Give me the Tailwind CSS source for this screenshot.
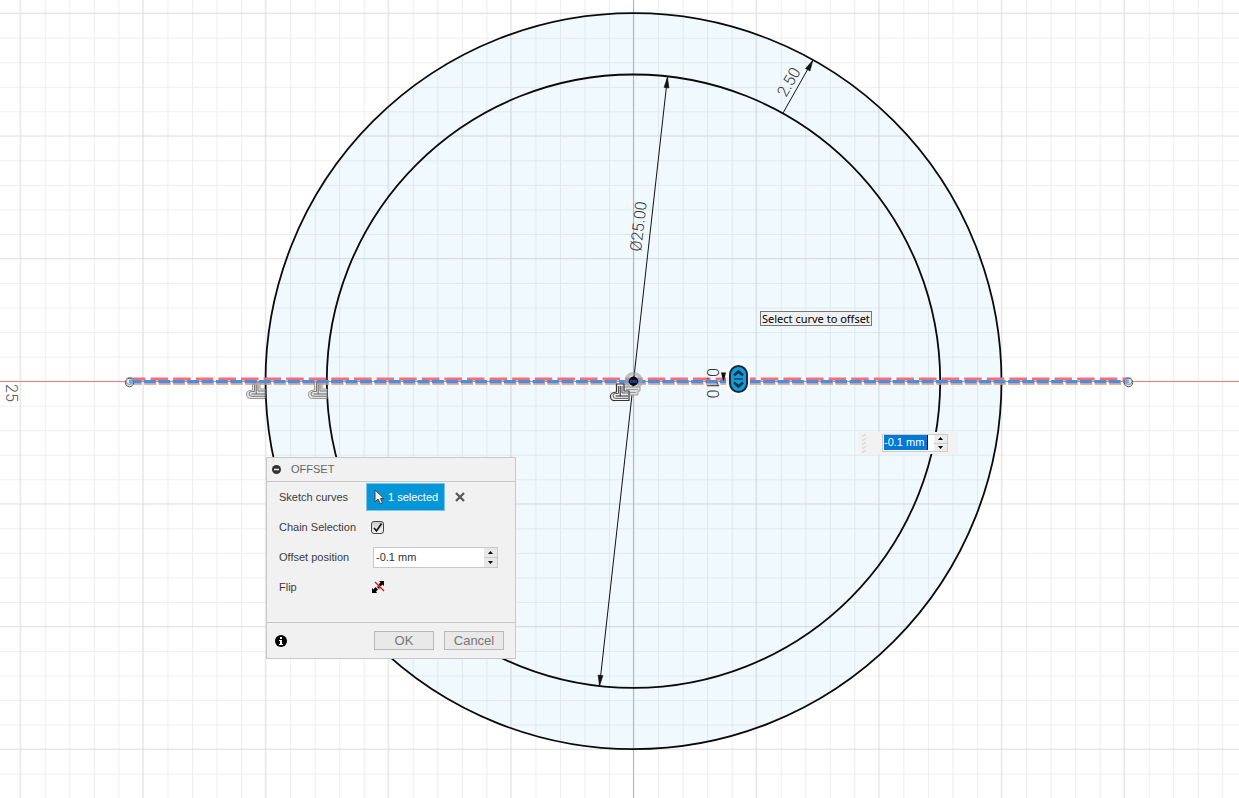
<!DOCTYPE html>
<html lang="en">
<head>
<meta charset="utf-8">
<title>Sketch offset</title>
<script src="https://cdn.jsdelivr.net/npm/@tailwindcss/browser@4"></script>
</head>
<body class="bg-white font-['Liberation_Sans',Arial,sans-serif] text-[11px] text-[#3c3c3c]">
<main class="relative h-screen min-h-[680px] w-full overflow-hidden">
<svg class="absolute inset-0 h-full w-full" fill="none" aria-label="Sketch canvas">
  <defs>
    <pattern id="minor" x="20.3" y="13.2" width="24.53" height="24.53" patternUnits="userSpaceOnUse">
      <path d="M0 .5H24.53M.5 0V24.53" stroke="#000" stroke-opacity=".065"/>
    </pattern>
    <pattern id="major" x="19.5" y="12.6" width="122.66" height="122.66" patternUnits="userSpaceOnUse">
      <path d="M0 .5H122.66M.5 0V122.66" stroke="#000" stroke-opacity=".08"/>
    </pattern>
    <g id="coincident" stroke-linejoin="round">
      <path d="M5.500 0h7.500v7h5v9.500H4a4 4 0 0 1-1-8l2.500-.5z" fill="#e4e4e4" stroke="#999"/>
      <path d="M7.500 0v9.500H4.500a2.300 2.300 0 0 0 0 4.800H18M11 0v9h7" stroke="#777"/>
      <path d="M9.200 1v11H4.500M9 12h9" stroke="#666"/>
    </g>
  </defs>
  <circle cx="633.5" cy="381.2" r="368" fill="#f0f9fe"/>
  <rect width="100%" height="100%" fill="url(#minor)"/>
  <rect width="100%" height="100%" fill="url(#major)"/>
  <rect x="633" y="0" width="1" height="100%" fill="#a0c4ae"/>
  <rect x="633" y="0" width="1" height="380" fill="#78dc8e"/>
  <rect x="0" y="381" width="100%" height="1" fill="#e87f7f"/>
  <circle cx="633.5" cy="381.2" r="368" stroke="#0a0a0a" stroke-width="1.800"/>
  <circle cx="633.5" cy="381.2" r="306.700" stroke="#0a0a0a" stroke-width="1.800"/>

  <use href="#coincident" x="247" y="382"/>
  <use href="#coincident" x="309" y="382"/>
  <path d="M130 384H1128" stroke="#d99a70" stroke-width="1.500" stroke-dasharray="12 2.400"/>
  <path d="M128 379H1128" stroke="#f46f77" stroke-width="3.200" stroke-dasharray="17.500 5.100"/>
  <path d="M129.500 381.700H1128" stroke="#4f8ce0" stroke-width="3.300" stroke-dasharray="12 2.400"/>
  <g stroke="#555">
    <circle cx="129.500" cy="382.500" r="4.200" fill="#e8edf5"/><circle cx="129.500" cy="381" r="3.500" stroke="#888"/>
    <path d="M129 381.500h4" stroke="#70a9f5" stroke-width="4"/>
    <circle cx="1128.500" cy="382.500" r="4.200" fill="#e8edf5"/><circle cx="1128.500" cy="381" r="3.500" stroke="#888"/>
    <path d="M1125 381.500h4" stroke="#70a9f5" stroke-width="4"/>
  </g>

  <g stroke="#111">
    <path d="M599.500 686 667.500 77M783 113 813 60"/>
    <path d="M667.500 77 669 88 664 87.500zM599.500 686 598 675 603 675.500zM813 60 810 71 805.500 68.500z" fill="#111" stroke-width=".5"/>
  </g>
  <circle cx="633.500" cy="381" r="7.500" stroke="#a0a4a8" stroke-opacity=".65" stroke-width="3.500"/>
  <path d="M624 387h16v4h-2v4h-10" fill="#dedede" stroke="#999"/>
  <path d="M626 389.500h12M628 392.500h8" stroke="#999"/>
  <g stroke-linejoin="round">
    <path d="M616.500 384h7.500v7h5v9.500h-14a4 4 0 0 1-1-8l2.500-.5z" fill="#f4f4f4" stroke="#333" stroke-width="1.200"/>
    <path d="M618.500 386v7.500h-3a2.300 2.300 0 0 0 0 4.800H628M622 386v7h6" stroke="#555"/>
    <path d="M620.200 386v10H615.500M620 396h8" stroke="#222"/>
  </g>
  <circle cx="633.500" cy="381.300" r="4.700" fill="#050a14"/>
  <path d="M630 381.500h7" stroke="#123c78" stroke-width="3"/>

  <g class="font-['Roboto',sans-serif] text-[16px] font-light" fill="#333">
    <text transform="translate(641 252) rotate(-83.500)">Ø25.00</text>
    <text transform="translate(786 98) rotate(-60.500)">2.50</text>
    <text transform="translate(707 368) rotate(90)">0.10</text>
    <text transform="translate(6 384) rotate(90)" fill="#555">25</text>
  </g>
  <path d="M721 372.500h5l-2 8h-1z" fill="#111"/>

  <rect x="726" y="363" width="24" height="32" rx="12" fill="#fff" fill-opacity=".85"/>
  <rect x="730" y="366" width="17" height="26" rx="8.500" fill="#129bdb" stroke="#162b38" stroke-width="2"/>
  <path d="m734 375.500 4.500-4 4.500 4M734 382.500l4.500 4 4.500-4" stroke="#123142" stroke-width="2.500"/>
  <path d="M734 379h9" stroke="#123142" stroke-width="1.200"/>
</svg>

<div role="tooltip" class="absolute left-[760px] top-[311px] border border-[#777] bg-[#f0f0f0] px-px font-['Noto_Sans',sans-serif] text-[11px] leading-[13px] whitespace-nowrap text-black">Select curve to offset</div>

<div class="absolute left-[858px] top-[432px] flex h-[22px] w-[100px] items-center bg-[#f2f2f2] pl-1">
  <svg class="h-[20px] w-[4px]" aria-hidden="true"><path d="M1 2v18M3 1v18" stroke="#ccc" stroke-dasharray="2 2"/></svg>
  <div class="ml-4 flex h-[18px] w-[66px] border border-[#ccc] bg-white">
    <label class="sr-only" for="float">Offset</label>
    <div class="min-w-0 flex-1 pl-px">
      <input id="float" value="-0.1 mm" class="block h-[15px] w-[44px] border-r border-black bg-[#0078d7] text-[11px] leading-[15px] text-white outline-none">
    </div>
    <div class="flex w-[13px] flex-col bg-[#ececec] text-black">
      <button class="flex flex-1 items-center justify-center border-b border-[#ccc]" aria-label="Increase"><svg width="5" height="3"><path d="M0 3 2.500 0 5 3z"/></svg></button>
      <button class="flex flex-1 items-center justify-center" aria-label="Decrease"><svg width="5" height="3"><path d="M0 0 2.500 3 5 0z"/></svg></button>
    </div>
  </div>
</div>

<section role="dialog" aria-labelledby="title" class="absolute left-[266px] top-[457px] w-[250px] border border-[#c8c8c8] bg-[#f1f1f1]">
  <header class="flex h-6 items-center gap-[10px] border-b border-[#c8c8c8] pl-[5px]">
    <button aria-label="Collapse"><svg class="block" width="9" height="9"><circle cx="4.500" cy="4.500" r="4.500" fill="#333"/><path d="M2 4.500h5" stroke="#f1f1f1" stroke-width="1.500"/></svg></button>
    <h1 id="title" class="text-[11px] text-[#666]">OFFSET</h1>
  </header>
  <div class="grid h-[140px] auto-rows-[30px] grid-cols-[87px_1fr] items-center pl-3">
    <span>Sketch curves</span>
    <div class="flex items-center gap-[10px]">
      <button class="flex h-7 w-[79px] items-center gap-1 border border-[#7cc4ea] bg-[#0696d7] pl-[7px] whitespace-nowrap text-white">
        <svg class="shrink-0" width="10" height="16"><path d="M1 1v12l3-3 2.500 5 2-1L6.500 9.500H10z" fill="#eee" stroke="#444"/></svg>
        1 selected
      </button>
      <button aria-label="Clear selection"><svg class="block" width="10" height="10"><path d="m1 1 8 8M9 1 1 9" stroke="#555" stroke-width="2.200"/></svg></button>
    </div>
    <label for="chain">Chain Selection</label>
    <div class="box-content grid w-[13px] pl-[5px]">
      <input id="chain" type="checkbox" checked class="col-start-1 row-start-1 h-[13px] w-[13px] appearance-none rounded-[3px] border border-[#444] bg-linear-to-b from-[#ccc] to-[#f4f4f4]">
      <svg class="pointer-events-none col-start-1 row-start-1" width="13" height="13" fill="none"><path d="m3 7 2.500 3L10.500 2.500" stroke="#111" stroke-width="1.600"/></svg>
    </div>
    <label for="offset">Offset position</label>
    <div class="ml-[7px] flex h-[21px] w-[125px] border border-[#c8c8c8] bg-white">
      <input id="offset" value="-0.1 mm" class="min-w-0 flex-1 pl-[2px] text-[11px] text-[#333] outline-none">
      <div class="flex w-[13px] flex-col bg-[#e8e8e8]">
        <button class="flex flex-1 items-center justify-center border-b border-[#ccc]" aria-label="Increase"><svg width="5" height="3" fill="#000"><path d="M0 3 2.500 0 5 3z"/></svg></button>
        <button class="flex flex-1 items-center justify-center" aria-label="Decrease"><svg width="5" height="3" fill="#000"><path d="M0 0 2.500 3 5 0z"/></svg></button>
      </div>
    </div>
    <span>Flip</span>
    <button class="ml-[6px] w-[13px]" aria-label="Flip"><svg class="block" width="13" height="13"><path d="M7 0h5v5l-1.500-1.500-2 2-2-2 2-2zM0 7l1.500 1.500 2-2.500 2.500 2.500-2 2L5 12H0zM4.500 5.500h3v3z" fill="#000"/><path d="m3 1 9 9" stroke="#f00" stroke-width="1.200"/></svg></button>
  </div>
  <footer class="flex h-9 items-center gap-[10px] border-t border-[#c8c8c8] pr-[11px] pl-2">
    <button class="mr-auto" aria-label="Information"><svg class="block" width="12" height="12"><circle cx="6" cy="6" r="6"/><path d="M5 2h2v2H5zM4 5h3v4h1v1H4V9h1V6H4z" fill="#fff"/></svg></button>
    <button class="h-[19px] w-[60px] border border-[#b9b9b9] bg-[#e9e9e9] text-[13px] leading-[17px] text-[#777]">OK</button>
    <button class="h-[19px] w-[60px] border border-[#b9b9b9] bg-[#e9e9e9] text-[13px] leading-[17px] text-[#777]">Cancel</button>
  </footer>
</section>
</main>
</body>
</html>
